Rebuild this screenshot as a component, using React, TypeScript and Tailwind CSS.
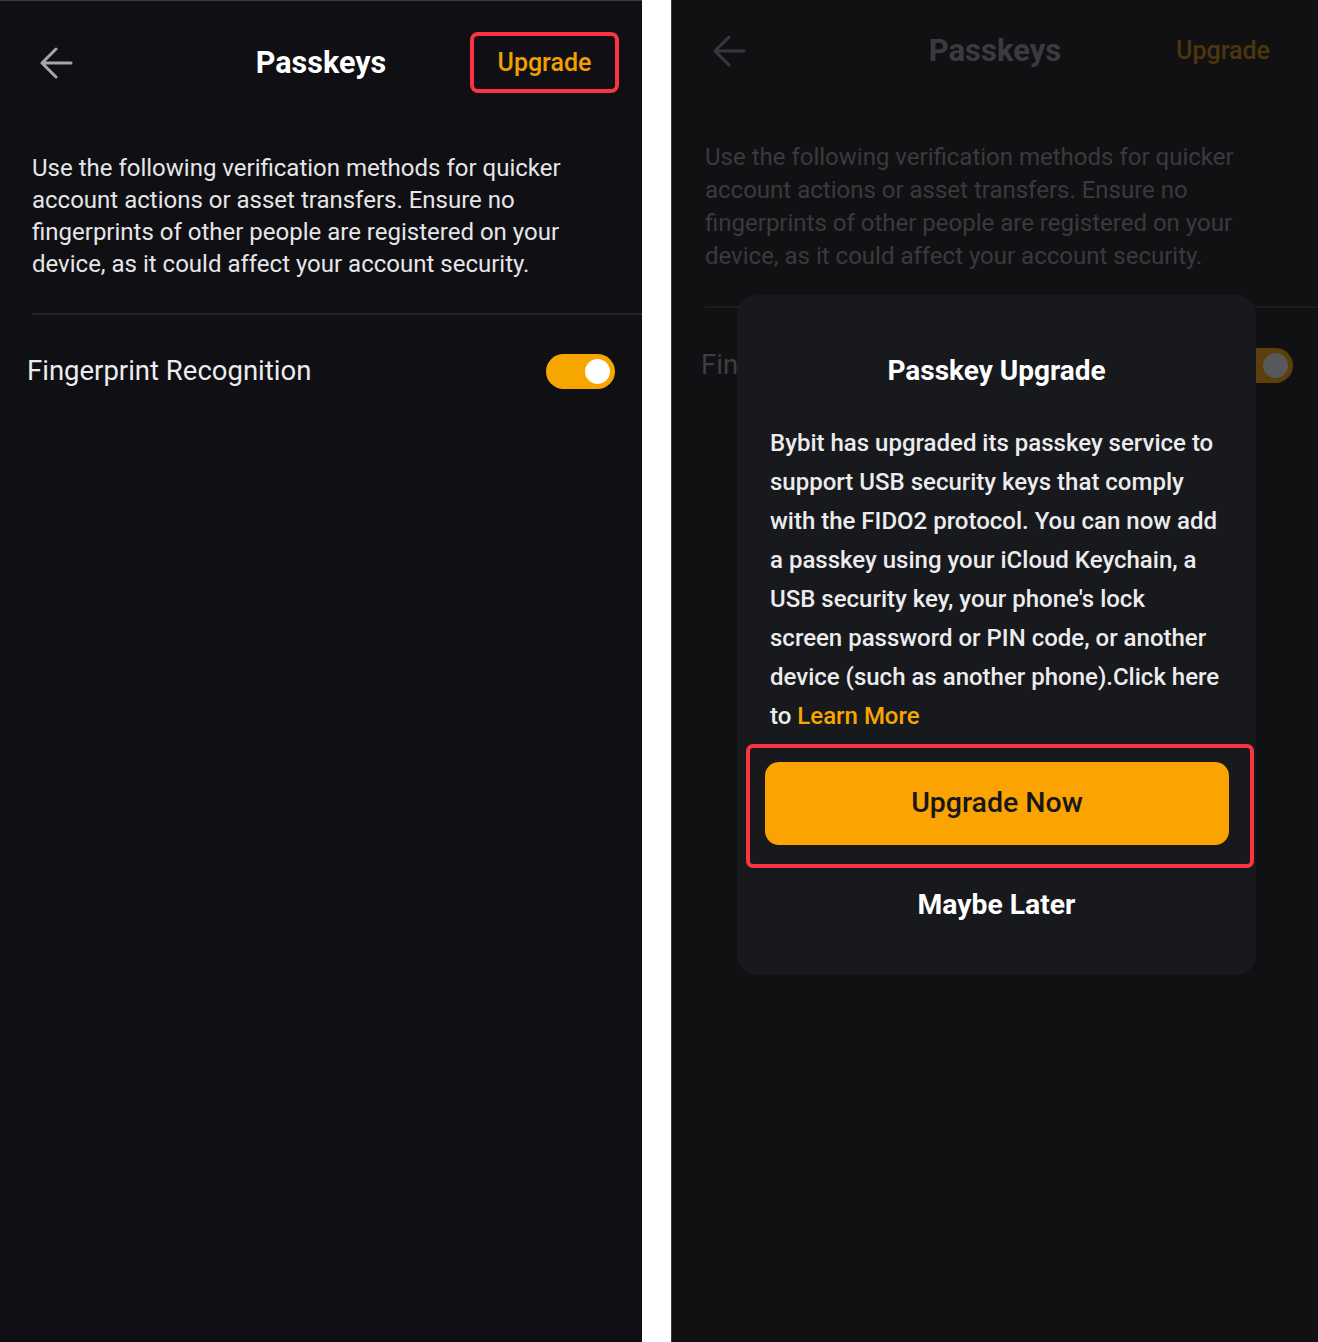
const description =
  'Use the following verification methods for quicker account actions or asset transfers. Ensure no fingerprints of other people are registered on your device, as it could affect your account security.';

function BackArrow({ color }: { color: string }) {
  return (
    <svg width="34" height="32" viewBox="0 0 34 32" fill="none" className={color}>
      <path d="M32 16H3M17 2L3 16l14 14" stroke="currentColor" strokeWidth="3" strokeLinecap="round" strokeLinejoin="round" />
    </svg>
  );
}

function Toggle({ dim }: { dim?: boolean }) {
  return (
    <div
      className={`flex h-[35px] w-[69px] items-center justify-end rounded-full pr-[5px] ${
        dim ? 'bg-[#5c400c]' : 'bg-[#f7a600]'
      }`}
    >
      <div className={`h-[25px] w-[25px] rounded-full ${dim ? 'bg-[#58585c]' : 'bg-white'}`} />
    </div>
  );
}

function SettingsScreen() {
  return (
    <div className="flex w-[642px] shrink-0 flex-col border-t border-[#3a3a40] bg-[#0f0f14]">
      {/* Header */}
      <div className="grid h-[123px] grid-cols-[1fr_auto_1fr] items-center">
        <div className="pl-[39px]">
          <BackArrow color="text-[#a3a7ae]" />
        </div>
        <h1 className="text-[30.5px] font-bold text-white">Passkeys</h1>
        <div className="flex justify-end pr-[23px]">
          <button className="flex h-[61px] w-[149px] items-center justify-center rounded-[8px] border-[4px] border-[#fb3442] text-[25px] font-medium text-[#f0a000]">
            Upgrade
          </button>
        </div>
      </div>

      {/* Description */}
      <p className="pl-[32px] pr-[50px] pt-[28px] text-[24px] leading-[32px] text-[#e6e6e8]">
        {description}
      </p>

      <div className="ml-[32px] mt-[33px] h-[2px] bg-[#24242a]" />

      {/* Fingerprint row */}
      <div className="flex h-[112px] items-center justify-between pl-[27px] pr-[27px]">
        <span className="text-[27.5px] text-[#ececee]">Fingerprint Recognition</span>
        <Toggle />
      </div>
    </div>
  );
}

function UpgradeDialog() {
  return (
    <div className="absolute left-[65px] top-[295px] flex h-[680px] w-[519px] flex-col rounded-[20px] bg-[#18191d]">
      <h2 className="pt-[58px] text-center text-[28px] font-bold leading-[36px] text-white">
        Passkey Upgrade
      </h2>
      <p className="mt-[35px] pl-[33px] pr-[36px] text-[24px] font-medium leading-[39px] text-[#ececee]">
        Bybit has upgraded its passkey service to support USB security keys that comply with the FIDO2
        protocol. You can now add a passkey using your iCloud Keychain, a USB security key, your phone's
        lock screen password or PIN code, or another device (such as another phone).Click here to{' '}
        <span className="text-[#f7a600]">Learn More</span>
      </p>

      {/* Highlighted action */}
      <div className="ml-[9px] mr-[2px] mt-[8px] rounded-[7px] border-[4px] border-[#fb3442] pb-[19px] pl-[15px] pr-[21px] pt-[14px]">
        <button className="flex h-[83px] w-full items-center justify-center rounded-[14px] bg-[#fba300] text-[28.5px] font-medium text-[#17171a]">
          Upgrade Now
        </button>
      </div>

      <button className="mt-[19px] text-center text-[28.3px] font-bold leading-[36px] text-white">
        Maybe Later
      </button>
    </div>
  );
}

function DimmedScreen() {
  return (
    <div className="relative flex flex-1 flex-col border-l border-[#3a3a3e] bg-[#111113]">
      <div className="grid h-[102px] grid-cols-[1fr_auto_1fr] items-center">
        <div className="pl-[40px]">
          <BackArrow color="text-[#38383c]" />
        </div>
        <h1 className="text-[31px] font-bold text-[#3b3b3f]">Passkeys</h1>
        <div className="flex justify-end pr-[48px]">
          <span className="text-[25px] font-medium text-[#4d360c]">Upgrade</span>
        </div>
      </div>

      <p className="pl-[33px] pr-[50px] pt-[39px] text-[24px] leading-[33px] text-[#3a3a3e]">
        {description}
      </p>

      <div className="ml-[33px] mt-[33px] h-[2px] bg-[#1c1c1f]" />

      <div className="flex h-[114px] items-center justify-between pl-[29px] pr-[25px]">
        <span className="text-[27.5px] text-[#3e3e42]">Fingerprint Recognition</span>
        <Toggle dim />
      </div>

      <UpgradeDialog />
    </div>
  );
}

export default function App() {
  return (
    <div className="flex h-[1342px] w-[1318px] bg-white font-['Roboto',sans-serif]">
      <SettingsScreen />
      <div className="w-[29px] shrink-0 bg-white" />
      <DimmedScreen />
    </div>
  );
}
